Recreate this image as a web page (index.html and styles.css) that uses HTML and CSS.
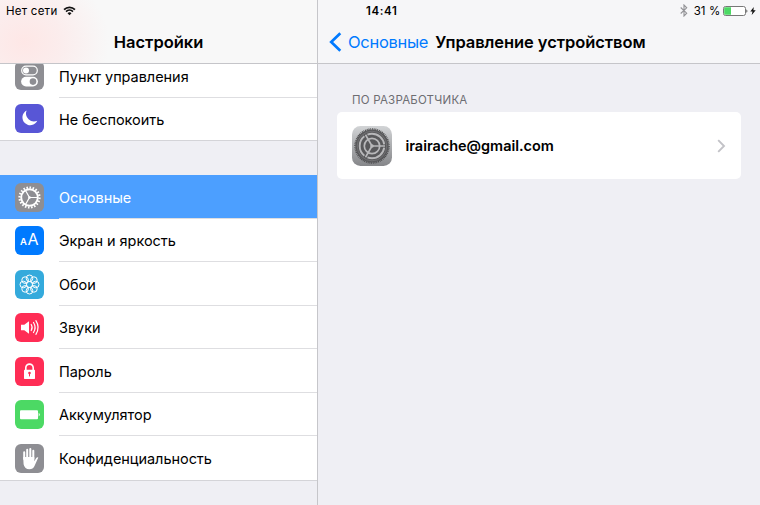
FILE: index.html
```html
<!DOCTYPE html>
<html lang="ru">
<head>
<meta charset="utf-8">
<title>Настройки</title>
<link rel="stylesheet" href="styles.css">
</head>
<body>
<main class="app">
  <aside class="sidebar">
    <header class="bar bar-left">
      <div class="status">
        <span class="carrier">Нет сети</span>
        <svg class="wifi" width="13" height="10" viewBox="0 0 14 11" fill="none" stroke="#111" stroke-width="1.9"><path d="M1 3.9a8.5 8.5 0 0 1 12 0M3.2 6.2a5.4 5.4 0 0 1 7.6 0"/><path d="M4.8 7.9a3.1 3.1 0 0 1 4.4 0L7 10.3z" fill="#111" stroke="none"/></svg>
      </div>
      <h1 class="title">Настройки</h1>
    </header>
    <nav class="list">
      <ul class="group group-clipped">
        <li class="row">
          <svg class="icon" viewBox="0 0 29 29"><rect width="29" height="29" rx="6" fill="#8e8e93"/><rect x="6.7" y="5.2" width="15.6" height="8.6" rx="4.3" fill="none" stroke="#fff" stroke-width="1.2"/><circle cx="11" cy="9.5" r="3" fill="#fff"/><rect x="6.1" y="15.7" width="16.8" height="9.8" rx="4.9" fill="#fff"/><circle cx="18" cy="20.6" r="3.3" fill="#8e8e93"/></svg>
          <span class="label">Пункт управления</span>
        </li>
        <li class="row">
          <svg class="icon" viewBox="0 0 29 29"><rect width="29" height="29" rx="6" fill="#5856d6"/><path d="M11.6 6.5a7.8 7.8 0 1 0 10.7 10.2A8 8 0 0 1 11.6 6.5z" fill="#fff"/></svg>
          <span class="label">Не беспокоить</span>
        </li>
      </ul>
      <ul class="group">
        <li class="row selected">
          <svg class="icon" viewBox="0 0 29 29"><rect width="29" height="29" rx="6" fill="#8e8e93"/><g fill="none" stroke="#fff"><circle cx="14.5" cy="14.5" r="8.3" stroke-width="1.9"/><circle cx="14.5" cy="14.5" r="10" stroke-width="2.2" pathLength="40" stroke-dasharray="1 1"/><path d="M14.5 14.5h8M14.5 14.5l-4-7M14.5 14.5l-4 7" stroke-width="1.2"/></g><circle cx="14.5" cy="14.5" r="1.3" fill="#fff"/></svg>
          <span class="label">Основные</span>
        </li>
        <li class="row">
          <svg class="icon" viewBox="0 0 29 29"><rect width="29" height="29" rx="6" fill="#007aff"/><text class="glyph-small" x="5" y="19.3">A</text><text class="glyph-large" x="12.6" y="19.3">A</text></svg>
          <span class="label">Экран и яркость</span>
        </li>
        <li class="row">
          <svg class="icon" viewBox="0 0 29 29"><rect width="29" height="29" rx="6" fill="#34aadc"/><g fill="none" stroke="#fff" stroke-width="1"><circle cx="14.5" cy="8.3" r="3.3"/><circle cx="18.9" cy="10.1" r="3.3"/><circle cx="20.7" cy="14.5" r="3.3"/><circle cx="18.9" cy="18.9" r="3.3"/><circle cx="14.5" cy="20.7" r="3.3"/><circle cx="10.1" cy="18.9" r="3.3"/><circle cx="8.3" cy="14.5" r="3.3"/><circle cx="10.1" cy="10.1" r="3.3"/><circle cx="14.5" cy="14.5" r="3"/></g></svg>
          <span class="label">Обои</span>
        </li>
        <li class="row">
          <svg class="icon" viewBox="0 0 29 29"><rect width="29" height="29" rx="6" fill="#ff2d55"/><path d="M6 11.8h3.3l4.7-3.6v12.6l-4.7-3.6H6z" fill="#fff"/><path d="M16.2 11.5q1.9 3 0 6M18.5 9.5q3.2 5 0 10M20.9 7.7q4.4 6.8 0 13.6" fill="none" stroke="#fff" stroke-width="1.2" stroke-linecap="round"/></svg>
          <span class="label">Звуки</span>
        </li>
        <li class="row">
          <svg class="icon" viewBox="0 0 29 29"><rect width="29" height="29" rx="6" fill="#ff2d55"/><path d="M10.8 13v-2.2a3.7 3.7 0 0 1 7.4 0V13" fill="none" stroke="#fff" stroke-width="1.6"/><rect x="9" y="12.7" width="11" height="9.2" rx=".6" fill="#fff"/><path d="M14.5 16.4v3" stroke="#ff2d55" stroke-width="1"/><circle cx="14.5" cy="16" r="1.3" fill="#ff2d55"/></svg>
          <span class="label">Пароль</span>
        </li>
        <li class="row">
          <svg class="icon" viewBox="0 0 29 29"><rect width="29" height="29" rx="6" fill="#4cd964"/><rect x="5" y="10.2" width="18" height="9" rx="1" fill="#fff"/><path d="M23.7 12.8q2.2 1.8 0 3.6z" fill="#fff"/></svg>
          <span class="label">Аккумулятор</span>
        </li>
        <li class="row">
          <svg class="icon" viewBox="0 0 29 29"><rect width="29" height="29" rx="6" fill="#8e8e93"/><path d="M9.2 15V8.2M12.2 14V5.7M15.3 14V5.1M18.3 15V6.8" stroke="#fff" stroke-width="2" stroke-linecap="round"/><path d="M8.2 13h11.1v4.2l2-3.2q.8-1.1 2-.6L19.5 22q-1.5 3.3-5.1 3.3-4.8 0-5.8-5.1z" fill="#fff"/></svg>
          <span class="label">Конфиденциальность</span>
        </li>
      </ul>
    </nav>
  </aside>
  <section class="detail">
    <header class="bar bar-right">
      <div class="status status-right">
        <span class="time">14:41</span>
        <span class="power">
          <svg class="bt" width="8" height="13" viewBox="0 0 8 13" fill="none" stroke="#929296" stroke-width="1.1"><path d="M.7 3.5l6 5.7L4 12V1l2.7 2.8L.7 9.5"/></svg>
          <span class="percent">31 %</span>
          <svg class="battery" width="25" height="10" viewBox="0 0 25 10"><rect x=".5" y=".5" width="22" height="9" rx="2" fill="#fff" stroke="#777"/><path d="M2.3 1.2H8v7.6H2.3Q1.2 8.8 1.2 7.7V2.3Q1.2 1.2 2.3 1.2z" fill="#4cd964"/><path d="M23.5 3.2q1.6 1.8 0 3.6z" fill="#222"/></svg>
          <svg class="bolt" width="6" height="8" viewBox="0 0 6 8"><path d="M3.8 0L.3 4.5h2.2L1.7 8l4-4.8H3.4z" fill="#111"/></svg>
        </span>
      </div>
      <div class="crumbs">
        <svg class="back" width="13" height="20" viewBox="0 0 13 20"><path d="M11.3 1.2L2.2 10l9.1 8.8" fill="none" stroke="#007aff" stroke-width="2.7"/></svg>
        <a class="parent">Основные</a>
        <h2 class="page-title">Управление устройством</h2>
      </div>
    </header>
    <div class="content">
      <h3 class="section">ПО РАЗРАБОТЧИКА</h3>
      <div class="card">
        <svg class="app-icon" viewBox="0 0 40 40"><defs><linearGradient id="metal" x1="0" y1="0" x2="0" y2="1"><stop offset="0" stop-color="#d2d4d6"/><stop offset="1" stop-color="#858689"/></linearGradient></defs><rect width="40" height="40" rx="8.5" fill="url(#metal)"/><circle cx="20" cy="20" r="16.6" fill="#59595b"/><circle cx="20" cy="20" r="17" fill="none" stroke="#48484a" stroke-width="1.5" pathLength="120" stroke-dasharray="1 1"/><circle cx="20" cy="20" r="14.8" fill="none" stroke="#77777a" stroke-width=".8"/><g fill="none" stroke="#b8b8ba"><circle cx="20" cy="20" r="12.3" stroke-width="1.9" pathLength="6" stroke-dasharray="1.72 .28" stroke-dashoffset="-.14"/><circle cx="20" cy="20" r="7.7" stroke-width="1.7"/><path d="M20 20h13M20 20l-6.500-11.260M20 20l-6.500 11.260" stroke-width="1.600"/></g><circle cx="20" cy="20" r="1.8" fill="#b8b8ba"/></svg>
        <span class="email">irairache@gmail.com</span>
        <svg class="chevron" width="9" height="14" viewBox="0 0 9 14"><path d="M1.2 1.2L7 7l-5.8 5.800" fill="none" stroke="#c2c2c7" stroke-width="1.9"/></svg>
      </div>
    </div>
  </section>
</main>
</body>
</html>
```
FILE: styles.css
```css
* { box-sizing: border-box; }
body { margin: 0; font-family: Inter, "Liberation Sans", sans-serif; color: #000; }
h1, h2, h3, ul { margin: 0; padding: 0; font: inherit; }
ul { list-style: none; }
svg { flex: none; display: block; }
.app { display: grid; grid-template-columns: 318px 1fr; width: 760px; height: 505px; background: #efeff4; overflow: hidden; }
.sidebar { display: flex; flex-direction: column; min-height: 0; border-right: 1px solid #c6c6ca; }
.bar { height: 64px; flex: none; border-bottom: 1px solid #c5c5c9; background: #f6f6f8; }
.bar-left { background: radial-gradient(ellipse 85px 75px at 24px 42px, #fee7e6 0, #fbeded 45%, transparent 100%), #f8f8f8; }
.status { height: 21px; display: flex; align-items: center; gap: 6px; padding-left: 6px; font-size: 11.5px; letter-spacing: .25px; white-space: nowrap; }
.title { text-align: center; font-size: 16.5px; font-weight: 600; line-height: 22px; margin-top: 10px; }
.list { flex: 1; min-height: 0; overflow: hidden; }
.group { background: #fff; border-bottom: 1px solid #d4d4d8; margin-bottom: 34.4px; }
.group-clipped { margin-top: -10px; height: 87px; }
.row { height: 43.5px; display: flex; align-items: center; gap: 15px; padding-left: 15px; }
.group-clipped .row:last-child { height: 42.5px; }
.icon { width: 29px; height: 29px; }
.label { align-self: stretch; flex: 1; display: flex; align-items: center; font-size: 14.5px; letter-spacing: -.04px; border-bottom: 1px solid #dedee1; padding-top: 1.5px; white-space: nowrap; }
.row:last-child .label { border-bottom: 0; padding-top: 1px; }
.selected { background: #4c9fff; color: #fff; }
.glyph-small { font: 600 9.5px Inter, sans-serif; fill: #fff; }
.glyph-large { font: 400 16px Inter, sans-serif; fill: #fff; }
.detail { min-width: 0; }
.status-right { padding: 0 4px 0 48px; justify-content: space-between; letter-spacing: .14px; }
.time { font-weight: 600; letter-spacing: .6px; }
.power { display: flex; align-items: center; }
.percent { margin: 0 2.5px 0 6px; }
.bolt { margin-left: 2px; }
.crumbs { display: flex; align-items: center; height: 22px; margin-top: 10px; padding-left: 11px; font-size: 16.5px; letter-spacing: -.07px; white-space: nowrap; }
.parent { color: #007aff; margin-left: 6px; letter-spacing: -.3px; }
.page-title { font-weight: 600; margin-left: 7px; }
.content { padding: 29px 19px 0; }
.section { font-size: 11.5px; letter-spacing: .22px; line-height: 14px; color: #6d6d72; padding-left: 15px; }
.card { height: 67px; margin-top: 5px; background: #fff; border-radius: 5px; display: flex; align-items: center; padding: 0 15px; }
.app-icon { width: 40px; height: 40px; }
.email { flex: 1; font-size: 14.5px; font-weight: 600; margin-left: 13.5px; letter-spacing: -.03px; }
```
